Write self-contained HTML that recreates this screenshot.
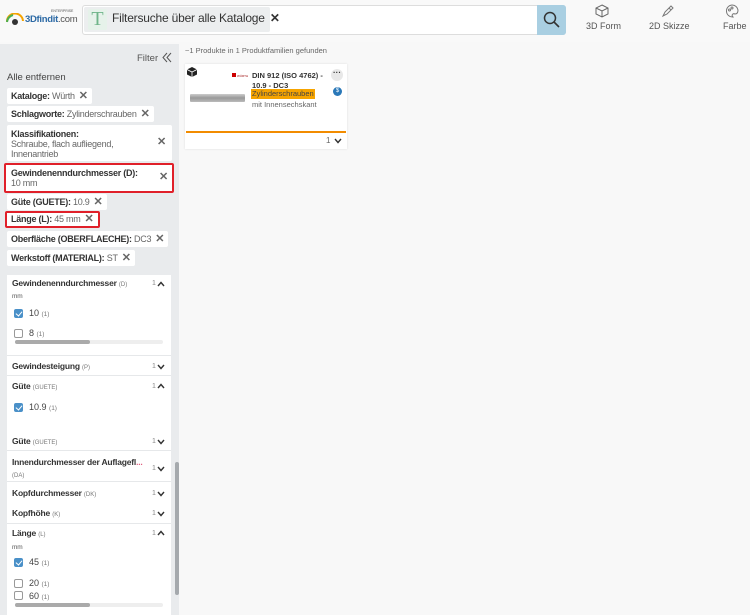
<!DOCTYPE html>
<html><head><meta charset="utf-8"><style>
*{box-sizing:border-box;margin:0;padding:0}
body{width:750px;height:615px;overflow:hidden;background:#f8f8f8;font-family:"Liberation Sans",sans-serif;position:relative;color:#333}
.a{position:absolute}
.chip{position:absolute;left:7px;background:#fff;font-size:9px;letter-spacing:-0.25px;padding:0 4px;line-height:16px;border-radius:2px;color:#333;white-space:nowrap}
.chip b{font-weight:bold;color:#333}
.chip span{color:#666}
.x{font-weight:bold;font-size:11px;color:#333;margin-left:4px}
.red{outline:2px solid #e0202a;outline-offset:-2px}
.f{position:absolute;left:12px;font-size:8.5px;letter-spacing:-0.2px;font-weight:bold;color:#333;white-space:nowrap}
.f small{font-weight:normal;font-size:6px;color:#777;letter-spacing:0}
.n{position:absolute;left:152px;font-size:7px;color:#888}
.ch{position:absolute;left:157px;width:8px;height:6px}
.sep{position:absolute;left:7px;width:164px;height:1px;background:#e6e8ea}
.cb{position:absolute;left:14px;width:9px;height:9px;border:1px solid #999;border-radius:2px;background:#fff}
.cb.on{background:#4a90c8;border-color:#4a90c8}
.cb.on:after{content:"";position:absolute;left:2px;top:0px;width:3px;height:5px;border:solid #fff;border-width:0 1.3px 1.3px 0;transform:rotate(40deg)}
.lv{position:absolute;left:29px;font-size:9px;color:#444}
.lv small{font-size:6.5px;color:#777}
.bar{position:absolute;left:15px;width:148px;height:4px;border-radius:2px;background:#eee}
.bar i{display:block;width:75px;height:4px;border-radius:2px;background:#aaa}
</style></head><body>
<svg width="0" height="0" style="position:absolute"><defs>
<symbol id="up" viewBox="0 0 8 6"><path d="M1 5 L4 1.5 L7 5" stroke="#333" stroke-width="1.4" fill="none"/></symbol>
<symbol id="dn" viewBox="0 0 8 6"><path d="M1 1 L4 4.5 L7 1" stroke="#333" stroke-width="1.4" fill="none"/></symbol>
</defs></svg>
<!-- header -->
<div class="a" style="left:0;top:0;width:750px;height:42px;background:#f9f9f9"></div>
<svg class="a" style="left:5px;top:13px" width="20" height="12"><path d="M2 9 A8 8 0 0 1 18 8" stroke="#f4a300" stroke-width="2" fill="none"/><path d="M2 9 A8 8 0 0 1 8 2" stroke="#4caf50" stroke-width="2" fill="none"/><circle cx="10" cy="9" r="3" fill="#333"/></svg>
<div class="a" style="left:25px;top:14px;font-size:9.5px;letter-spacing:-0.3px;color:#2d6aa5;font-weight:bold">3Dfindit<span style="font-weight:normal;color:#555">.com</span></div>
<div class="a" style="left:51px;top:9px;font-size:3.5px;color:#555">ENTERPRISE</div>
<div class="a" style="left:82px;top:5px;width:484px;height:30px;background:#fff;border:1px solid #ddd;border-radius:3px"></div>
<div class="a" style="left:84px;top:7px;width:186px;height:25px;background:#eceeef;border-radius:2px"></div>
<div class="a" style="left:88px;top:9px;width:19px;height:21px;background:#e6f2ea;border-radius:2px;color:#6fb58a;font-family:'Liberation Serif',serif;font-size:20px;line-height:21px;text-align:center">T</div>
<div class="a" style="left:112px;top:11px;font-size:12px;letter-spacing:-0.2px;color:#333">Filtersuche über alle Kataloge <b style="margin-left:2px">✕</b></div>
<div class="a" style="left:537px;top:5px;width:29px;height:30px;background:#a9cfe2;border-radius:0 3px 3px 0"></div>
<svg class="a" style="left:543px;top:11px" width="18" height="18"><circle cx="7" cy="7" r="5.5" stroke="#333" stroke-width="1.5" fill="none"/><path d="M11 11 L16 16" stroke="#333" stroke-width="1.6"/></svg>
<svg class="a" style="left:595px;top:4px" width="14" height="14" fill="none" stroke="#666" stroke-width="1"><path d="M7 1 L13 4 L13 10 L7 13 L1 10 L1 4 Z M1 4 L7 7 L13 4 M7 7 L7 13"/></svg>
<div class="a" style="left:586px;top:21px;font-size:9px;color:#555">3D Form</div>
<svg class="a" style="left:661px;top:4px" width="14" height="14" fill="none" stroke="#777" stroke-width="1"><path d="M2 12 L4 8 L10 2 L12 4 L6 10 Z M8 4 L10 6"/></svg>
<div class="a" style="left:649px;top:21px;font-size:9px;color:#555">2D Skizze</div>
<svg class="a" style="left:725px;top:4px" width="14" height="14" fill="none" stroke="#777" stroke-width="1"><path d="M7 1 A6 6 0 1 0 8 13 C6 11 8 9 10 10 C13 10 13 7 13 6 A6 6 0 0 0 7 1Z"/><circle cx="4.5" cy="6" r="1"/><circle cx="7" cy="4" r="1"/></svg>
<div class="a" style="left:723px;top:21px;font-size:9px;color:#555">Farbe</div>
<!-- sidebar -->
<div class="a" style="left:0;top:44px;width:179px;height:571px;background:#e9ebed"></div>
<div class="a" style="left:137px;top:53px;font-size:9.5px;color:#555">Filter</div>
<svg class="a" style="left:162px;top:52px" width="10" height="11"><path d="M5 1 L1 5.5 L5 10 M9 1 L5 5.5 L9 10" stroke="#555" stroke-width="1" fill="none"/></svg>
<div class="a" style="left:7px;top:72px;font-size:9.5px;color:#444">Alle entfernen</div>
<div class="chip" style="top:88px"><b>Kataloge:</b> <span>Würth</span><span class="x">✕</span></div>
<div class="chip" style="top:106px"><b>Schlagworte:</b> <span>Zylinderschrauben</span><span class="x">✕</span></div>
<div class="chip" style="top:125px;width:165px;height:36px;line-height:10px;padding-top:4px"><b>Klassifikationen:</b><br><span>Schraube, flach aufliegend,<br>Innenantrieb</span><span class="x" style="position:absolute;right:6px;top:12px">✕</span></div>
<div class="chip red" style="top:163px;left:4px;width:170px;height:30px;line-height:10px;padding:5px 7px"><b>Gewindenenndurchmesser (D):</b><br><span>10 mm</span><span class="x" style="position:absolute;right:6px;top:9px">✕</span></div>
<div class="chip" style="top:194px"><b>Güte (GUETE):</b> <span>10.9</span><span class="x">✕</span></div>
<div class="chip red" style="top:211px;left:5px;line-height:17px;padding:0 6px"><b>Länge (L):</b> <span>45 mm</span><span class="x">✕</span></div>
<div class="chip" style="top:231px"><b>Oberfläche (OBERFLAECHE):</b> <span>DC3</span><span class="x">✕</span></div>
<div class="chip" style="top:250px"><b>Werkstoff (MATERIAL):</b> <span>ST</span><span class="x">✕</span></div>
<!-- facet panel -->
<div class="a" style="left:7px;top:275px;width:164px;height:340px;background:#fff"></div>
<div class="a" style="left:175px;top:462px;width:4px;height:133px;background:#a5a9ad;border-radius:2px"></div>
<div class="f" style="top:278px">Gewindenenndurchmesser <small>(D)</small></div><div class="n" style="top:280px">1</div><svg class="ch" style="top:281px"><use href="#up"/></svg>
<div class="f" style="top:293px;font-size:6.5px;font-weight:normal;color:#555">mm</div>
<div class="cb on" style="top:309px"></div><div class="lv" style="top:308px">10 <small>(1)</small></div>
<div class="cb" style="top:329px"></div><div class="lv" style="top:328px">8 <small>(1)</small></div>
<div class="bar" style="top:340px"><i></i></div>
<div class="sep" style="top:355px"></div>
<div class="f" style="top:361px">Gewindesteigung <small>(P)</small></div><div class="n" style="top:363px">1</div><svg class="ch" style="top:364px"><use href="#dn"/></svg>
<div class="sep" style="top:375px"></div>
<div class="f" style="top:381px">Güte <small>(GUETE)</small></div><div class="n" style="top:383px">1</div><svg class="ch" style="top:383px"><use href="#up"/></svg>
<div class="cb on" style="top:403px"></div><div class="lv" style="top:402px">10.9 <small>(1)</small></div>
<div class="f" style="top:436px">Güte <small>(GUETE)</small></div><div class="n" style="top:438px">1</div><svg class="ch" style="top:439px"><use href="#dn"/></svg>
<div class="sep" style="top:450px"></div>
<div class="f" style="top:457px">Innendurchmesser der Auflagefl<span style="color:#e06080">...</span></div>
<div class="f" style="top:469px"><small>(DA)</small></div><div class="n" style="top:465px">1</div><svg class="ch" style="top:466px"><use href="#dn"/></svg>
<div class="sep" style="top:481px"></div>
<div class="f" style="top:488px">Kopfdurchmesser <small>(DK)</small></div><div class="n" style="top:490px">1</div><svg class="ch" style="top:491px"><use href="#dn"/></svg>
<div class="f" style="top:508px">Kopfhöhe <small>(K)</small></div><div class="n" style="top:510px">1</div><svg class="ch" style="top:511px"><use href="#dn"/></svg>
<div class="sep" style="top:523px"></div>
<div class="f" style="top:528px">Länge <small>(L)</small></div><div class="n" style="top:530px">1</div><svg class="ch" style="top:530px"><use href="#up"/></svg>
<div class="f" style="top:544px;font-size:6.5px;font-weight:normal;color:#555">mm</div>
<div class="cb on" style="top:558px"></div><div class="lv" style="top:557px">45 <small>(1)</small></div>
<div class="cb" style="top:579px"></div><div class="lv" style="top:578px">20 <small>(1)</small></div>
<div class="cb" style="top:591px"></div><div class="lv" style="top:591px">60 <small>(1)</small></div>
<div class="bar" style="top:603px"><i></i></div>
<!-- results -->
<div class="a" style="left:185px;top:46px;font-size:7.5px;color:#666">~1 Produkte in 1 Produktfamilien gefunden</div>
<div class="a" style="left:185px;top:64px;width:162px;height:85px;background:#fff;box-shadow:0 0 2px #ddd"></div>
<svg class="a" style="left:187px;top:67px" width="10" height="10"><path d="M5 0 L10 2.5 L10 7.5 L5 10 L0 7.5 L0 2.5Z" fill="#222"/><path d="M0 2.5 L5 5 L10 2.5 M5 5 L5 10" stroke="#fff" stroke-width="0.8" fill="none"/></svg>
<div class="a" style="left:190px;top:94px;width:55px;height:8px;background:linear-gradient(#ccc,#999,#bbb);border-radius:1px"></div>
<div class="a" style="left:232px;top:73px;width:4px;height:4px;background:#c00"></div>
<div class="a" style="left:237px;top:74px;font-size:3px;color:#900">WÜRTH</div>
<div class="a" style="left:252px;top:71px;font-size:7.5px;font-weight:bold;color:#333;line-height:9.5px">DIN 912 (ISO 4762) -<br>10.9 - DC3</div>
<div class="a" style="left:251px;top:89px;font-size:7.5px;background:#f6a400;color:#444;padding:0 1px;line-height:10px">Zylinderschrauben</div>
<div class="a" style="left:252px;top:100px;font-size:7.5px;color:#666">mit Innensechskant</div>
<div class="a" style="left:331px;top:69px;width:12px;height:12px;border-radius:6px;background:#e8e8e8;font-size:8px;line-height:8px;text-align:center;font-weight:bold">···</div>
<div class="a" style="left:333px;top:87px;width:9px;height:9px;border-radius:5px;background:#2a78b8;color:#fff;font-size:6px;line-height:9px;text-align:center">$</div>
<div class="a" style="left:186px;top:131px;width:160px;height:2px;background:#f28c00"></div>
<div class="a" style="left:326px;top:136px;font-size:8px;color:#666">1</div>
<svg class="a" style="left:334px;top:138px" width="8" height="6"><use href="#dn"/></svg>
</body></html>
